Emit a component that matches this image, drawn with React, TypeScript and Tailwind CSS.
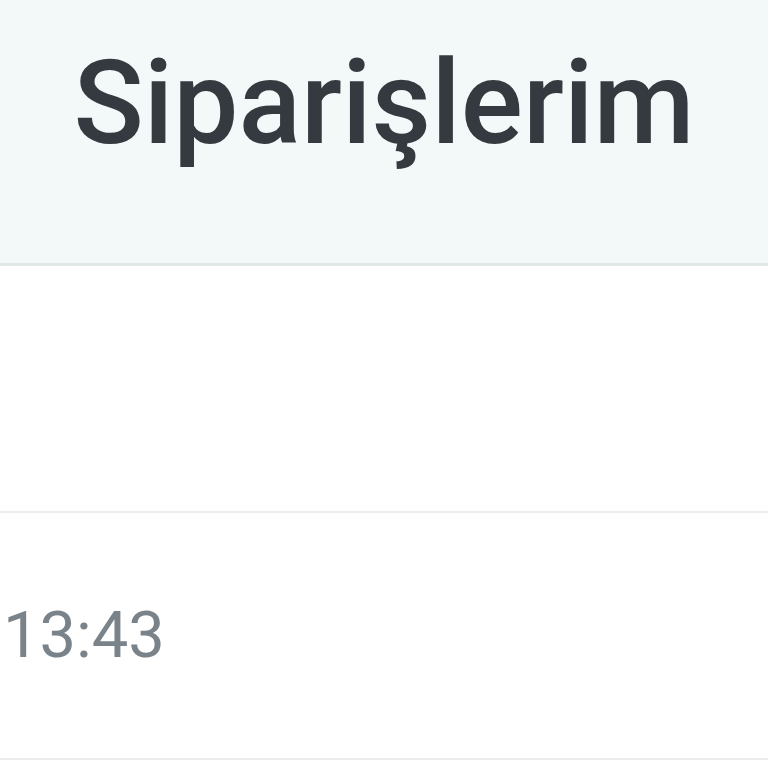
import React from "react";

const ROWS = [{ time: "" }, { time: "13:43" }];

export default function App() {
  return (
    <div className="w-[768px] h-[768px] overflow-hidden bg-white font-['Roboto',sans-serif]">
      <header className="h-[266px] bg-[#f3f8f8] border-b-[3px] border-[#e1e6e6] flex items-center justify-center pb-[58px]">
        <h1 className="text-[116px] leading-none font-medium text-[#353a40]">
          Siparişlerim
        </h1>
      </header>
      <ul>
        {ROWS.map(({ time }, i) => (
          <li
            key={i}
            className="h-[247px] border-b-2 border-[#ececec] flex items-center pl-[3px]"
          >
            <span className="text-[65px] leading-none text-[#7b838a]">{time}</span>
          </li>
        ))}
      </ul>
    </div>
  );
}
